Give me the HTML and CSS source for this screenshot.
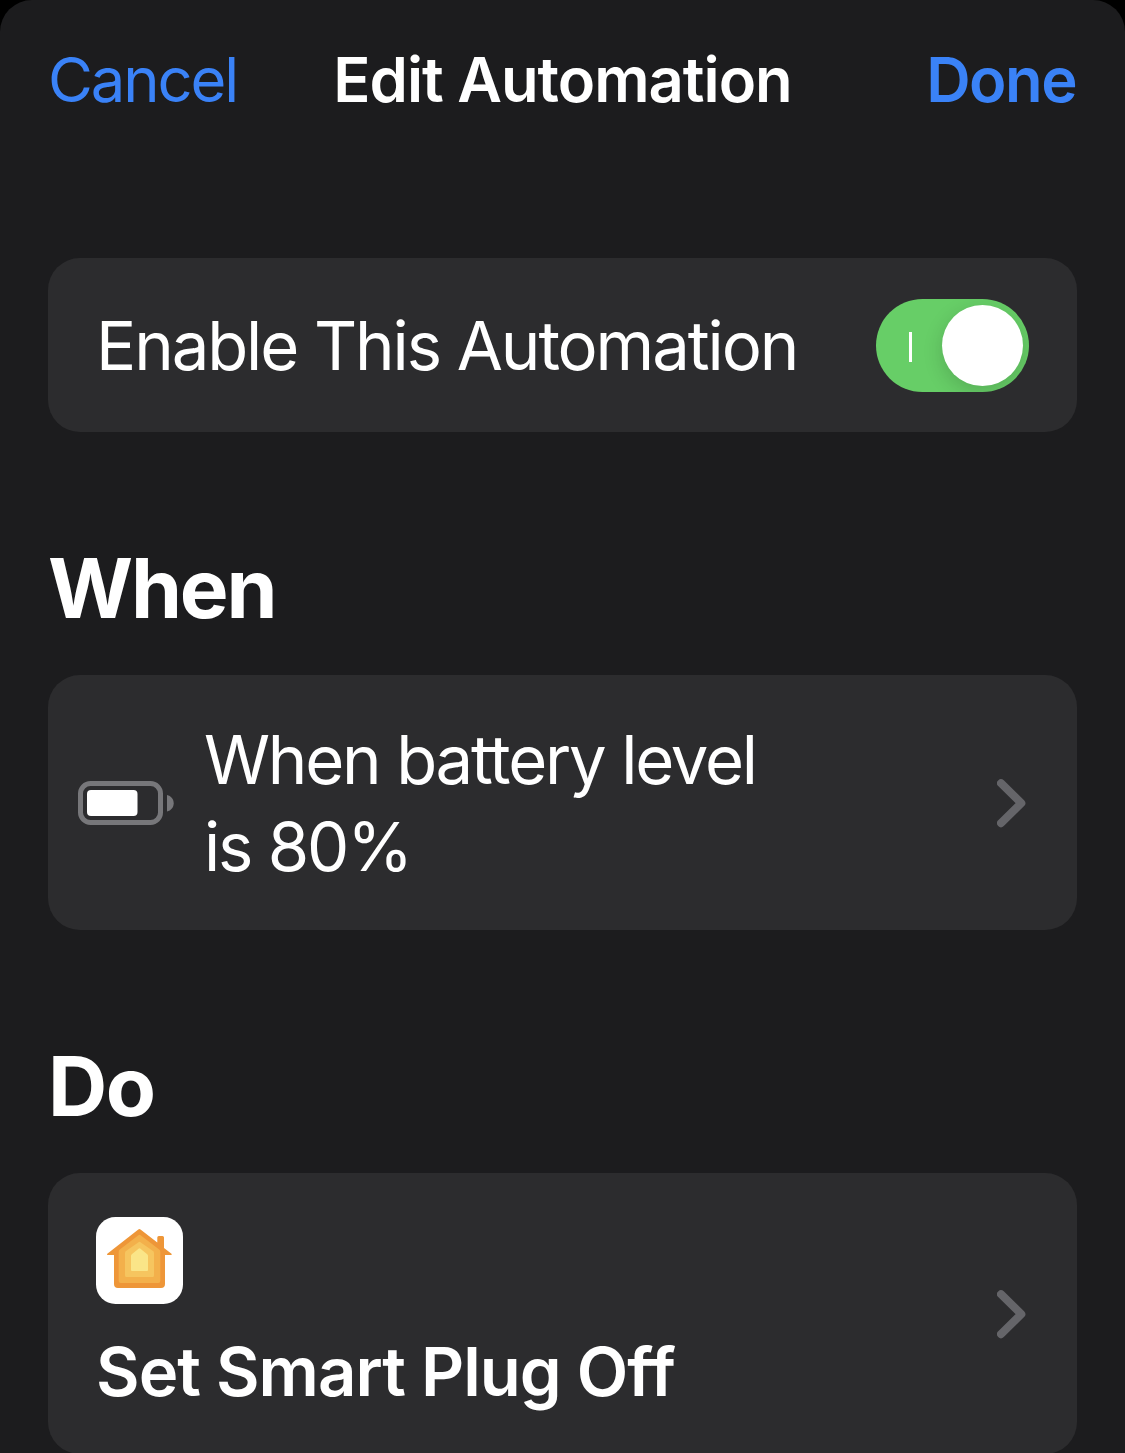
FILE: index.html
```html
<!DOCTYPE html>
<html lang="en">
<head>
<meta charset="utf-8">
<title>Edit Automation</title>
<link rel="stylesheet" href="styles.css">
</head>
<body>
<main class="sheet">
  <header class="nav">
    <a class="cancel">Cancel</a>
    <h1 class="title">Edit Automation</h1>
    <a class="done">Done</a>
  </header>
  <section class="card enable">
    <span class="enable-label">Enable This Automation</span>
    <span class="toggle"><i class="tick"></i><i class="knob"></i></span>
  </section>
  <h2 class="heading when">When</h2>
  <section class="card trigger">
    <svg class="battery" width="96" height="44" viewBox="0 0 96 44">
      <rect x="2.5" y="2.5" width="80" height="39" rx="10" fill="none" stroke="#77777a" stroke-width="5"/>
      <rect x="9" y="9" width="50.500" height="26" rx="4" fill="#fff"/>
      <path d="M89 14C93 15 95.700 18 95.700 22.200S93 29.500 89 30.500Z" fill="#77777a"/>
    </svg>
    <p class="trigger-text">When battery level<br>is 80%</p>
    <svg class="chevron" width="32" height="52" viewBox="0 0 32 52"><path d="M4 6.200 24.300 26.200 4 46.200" fill="none" stroke="#656569" stroke-width="8" stroke-linecap="round" stroke-linejoin="round"/></svg>
  </section>
  <h2 class="heading do">Do</h2>
  <section class="card action">
    <div class="action-body">
      <svg class="home" width="87" height="87" viewBox="0 0 87 87">
        <rect width="87" height="87" rx="19.500" fill="#fff"/>
        <path d="M42.300 12.400Q43.400 11.600 44.500 12.400L61.300 25.500V20.500Q61.300 19 62.800 19H66.500Q68 19 68 20.500V31L75.500 36.800Q76.300 38 75 38H69V67Q69 71 65 71H22Q18 71 18 67V38H12Q10.500 38 11.300 36.800Z" fill="#ee9638"/>
        <path d="M42.400 18.300Q43.500 17.400 44.600 18.300L63.200 32.500Q64.300 33.300 64.300 35V64Q64.300 66 62.300 66H24.700Q22.700 66 22.700 64V35Q22.700 33.300 23.800 32.500Z" fill="#f3b04b"/>
        <path d="M42.500 25.200Q43.500 24.400 44.500 25.200L57 34Q58 34.700 58 36V58.500Q58 60 56.500 60H30.500Q29 60 29 58.500V36Q29 34.700 30 34Z" fill="#f6c55f"/>
        <path d="M42.500 31.700Q43.500 30.900 44.500 31.700L51.200 37.300Q52 38 52 39V53Q52 54 51 54H36Q35 54 35 53V39Q35 38 35.800 37.300Z" fill="#fae588"/>
      </svg>
      <strong class="action-label">Set Smart Plug Off</strong>
    </div>
    <svg class="chevron" width="32" height="52" viewBox="0 0 32 52"><path d="M4 6.200 24.300 26.200 4 46.200" fill="none" stroke="#656569" stroke-width="8" stroke-linecap="round" stroke-linejoin="round"/></svg>
  </section>
</main>
</body>
</html>
```
FILE: styles.css
```css
* { box-sizing: border-box; }
html { background: #000; }
body { margin: 0; height: 1453px; overflow: hidden; font-family: Inter, "Liberation Sans", sans-serif; font-variant-ligatures: none; color: #fff; white-space: nowrap; }
h1, h2, p { margin: 0; }
svg { display: block; flex: none; }
.sheet { height: 1453px; overflow: hidden; padding: 0 48px; background: #1c1c1e; border-radius: 32px 32px 0 0; }
.nav { height: 160px; display: grid; grid-template-columns: 1fr auto 1fr; align-items: center; font-size: 61.5px; line-height: 76px; }
.nav a { color: #3a82f7; }
.cancel { letter-spacing: -2.1px; }
.title { font-size: 61.5px; font-weight: 600; letter-spacing: -1px; }
.nav .done { padding-right: 1px; text-align: right; font-weight: 600; letter-spacing: -1.5px; }
.card { background: #2c2c2e; border-radius: 32px; display: flex; align-items: center; }
.enable { margin-top: 98px; height: 174px; padding: 0 48px; justify-content: space-between; }
.enable-label { font-size: 67px; letter-spacing: -2.1px; }
.toggle { width: 153px; height: 93px; padding: 6px; overflow: hidden; border-radius: 47px; background: #67ce67; display: flex; align-items: center; justify-content: space-between; }
.tick { width: 3px; height: 30px; margin: 3px 0 0 27px; background: #fff; }
.knob { width: 81px; height: 81px; border-radius: 50%; background: #fff; box-shadow: 0 6px 20px rgba(0, 0, 0, .16); }
.heading { font-size: 82px; line-height: 100px; font-weight: 700; }
.when { margin-top: 107px; letter-spacing: -2.2px; }
.trigger { margin-top: 36px; height: 255px; padding: 0 48px 0 30px; }
.battery { margin-top: 1px; }
.trigger-text { flex: 1; margin-left: 30px; font-size: 67px; line-height: 87px; letter-spacing: -2.2px; }
.do { margin-top: 107px; letter-spacing: -1.5px; }
.action { margin-top: 36px; height: 281px; padding: 0 48px; }
.action-body { flex: 1; padding-top: 1px; }
.action-label { display: block; margin-top: 28px; font-size: 67px; line-height: 80px; font-weight: 600; letter-spacing: -.95px; }
```
